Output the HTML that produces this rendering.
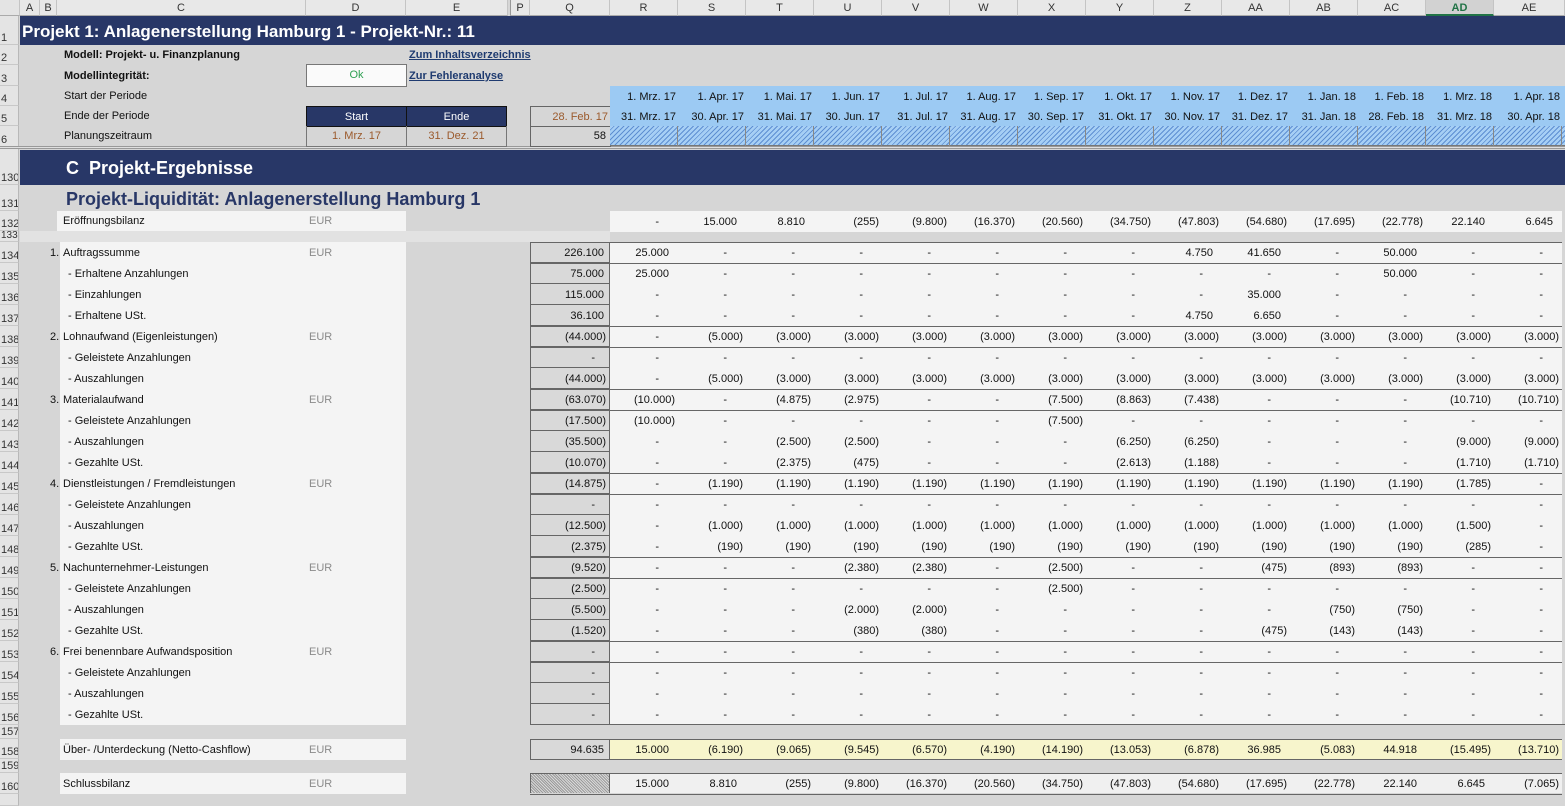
<!DOCTYPE html>
<html><head><meta charset="utf-8"><style>
*{margin:0;padding:0;box-sizing:border-box}
body{width:1565px;height:806px;overflow:hidden;background:#d6d6d6;font-family:"Liberation Sans",Arial,sans-serif;font-size:11px;color:#111;position:relative}
.a{position:absolute}
.rh{position:absolute;left:0;width:19px;background:#e4e4e4;border-right:1px solid #b8b8b8;border-bottom:1px solid #c8c8c8;font-size:11px;color:#333;padding-left:1px;overflow:hidden;display:flex;align-items:flex-end;line-height:12px}
.ch{position:absolute;top:0;height:16px;background:#e8e8e8;border-right:1px solid #c4c4c4;border-bottom:1px solid #aaa;text-align:center;line-height:16px;color:#333;font-size:11px}
.row{position:absolute;left:0;width:1565px;height:21px;line-height:23px}
.lb{position:absolute;left:60px;width:346px;height:21px;background:#f4f4f4;line-height:23px}
.lb span{position:absolute}
.u{left:249px;color:#8a8a8a}
.d{position:absolute;left:530px;top:0;display:flex;height:21px}
.d i{font-style:normal;display:block;width:68px;height:21px;text-align:right;padding-right:9px;background:#f4f4f4;line-height:23px}
.d i.n{padding-right:3px}
.d i.z{padding-right:19px}
.d b{font-weight:normal;display:block;width:80px;height:21px;text-align:right;padding-right:5px;background:#d9d9d9;border:1px solid #666;border-top:none;line-height:23px}
.d b.n{padding-right:3px}
.d b.z{padding-right:14px}
.bt .d i{border-top:1px solid #666;line-height:21px}
.bt .d b{border-top:1px solid #666;line-height:21px}
.nav{background:#283767;color:#fff;font-weight:bold}
.blue{background:#9ccaf3}
.hatch{background:repeating-linear-gradient(135deg,#a6cff5 0,#a6cff5 2.5px,#5e8fd2 2.5px,#5e8fd2 3.5px)}
.lnk{color:#1f3b70;font-weight:bold;text-decoration:underline}
.dt span{width:68px;text-align:right;padding-right:2px}
</style></head><body>

<div class="ch" style="left:0;width:20px;background:#e4e4e4"></div>
<div class="ch" style="left:20px;width:20px">A</div>
<div class="ch" style="left:40px;width:17px">B</div>
<div class="ch" style="left:57px;width:249px">C</div>
<div class="ch" style="left:306px;width:100px">D</div>
<div class="ch" style="left:406px;width:102px">E</div>
<div class="ch" style="left:510px;width:20px;border-left:1px solid #999">P</div>
<div class="ch" style="left:530px;width:80px">Q</div>
<div class="ch" style="left:610px;width:68px">R</div>
<div class="ch" style="left:678px;width:68px">S</div>
<div class="ch" style="left:746px;width:68px">T</div>
<div class="ch" style="left:814px;width:68px">U</div>
<div class="ch" style="left:882px;width:68px">V</div>
<div class="ch" style="left:950px;width:68px">W</div>
<div class="ch" style="left:1018px;width:68px">X</div>
<div class="ch" style="left:1086px;width:68px">Y</div>
<div class="ch" style="left:1154px;width:68px">Z</div>
<div class="ch" style="left:1222px;width:68px">AA</div>
<div class="ch" style="left:1290px;width:68px">AB</div>
<div class="ch" style="left:1358px;width:68px">AC</div>
<div class="ch" style="left:1426px;width:68px;background:#d2d2d2;color:#217346;font-weight:bold;border-bottom:2px solid #217346">AD</div>
<div class="ch" style="left:1494px;width:71px">AE</div>

<div class="rh" style="top:16px;height:29px">1</div>
<div class="rh" style="top:45px;height:20px">2</div>
<div class="rh" style="top:65px;height:21px">3</div>
<div class="rh" style="top:86px;height:20px">4</div>
<div class="rh" style="top:106px;height:20px">5</div>
<div class="rh" style="top:126px;height:21px">6</div>
<div class="a" style="top:146px;left:0;width:1565px;height:3px;border-top:1px solid #999;border-bottom:1px solid #999;background:#e0e0e0"></div>
<div class="rh" style="top:149px;height:36px">130</div>
<div class="rh" style="top:185px;height:26px">131</div>
<div class="rh" style="top:211px;height:20px">132</div>
<div class="rh" style="top:231px;height:11px;font-size:10px;line-height:10px">133</div>
<div class="rh" style="top:242px;height:21px">134</div>
<div class="rh" style="top:263px;height:21px">135</div>
<div class="rh" style="top:284px;height:21px">136</div>
<div class="rh" style="top:305px;height:21px">137</div>
<div class="rh" style="top:326px;height:21px">138</div>
<div class="rh" style="top:347px;height:21px">139</div>
<div class="rh" style="top:368px;height:21px">140</div>
<div class="rh" style="top:389px;height:21px">141</div>
<div class="rh" style="top:410px;height:21px">142</div>
<div class="rh" style="top:431px;height:21px">143</div>
<div class="rh" style="top:452px;height:21px">144</div>
<div class="rh" style="top:473px;height:21px">145</div>
<div class="rh" style="top:494px;height:21px">146</div>
<div class="rh" style="top:515px;height:21px">147</div>
<div class="rh" style="top:536px;height:21px">148</div>
<div class="rh" style="top:557px;height:21px">149</div>
<div class="rh" style="top:578px;height:21px">150</div>
<div class="rh" style="top:599px;height:21px">151</div>
<div class="rh" style="top:620px;height:21px">152</div>
<div class="rh" style="top:641px;height:21px">153</div>
<div class="rh" style="top:662px;height:21px">154</div>
<div class="rh" style="top:683px;height:21px">155</div>
<div class="rh" style="top:704px;height:21px">156</div>
<div class="rh" style="top:725px;height:14px">157</div>
<div class="rh" style="top:739px;height:20px">158</div>
<div class="rh" style="top:759px;height:14px">159</div>
<div class="rh" style="top:773px;height:21px">160</div>
<div class="rh" style="top:794px;height:12px"></div>

<div class="a nav" style="left:20px;top:16px;width:1545px;height:29px;font-size:17px;line-height:31px;padding-left:2px">Projekt 1: Anlagenerstellung Hamburg 1 - Projekt-Nr.: 11</div>
<div class="a" style="left:64px;top:45px;line-height:21px;font-weight:bold">Modell: Projekt- u. Finanzplanung</div>
<div class="a lnk" style="left:409px;top:45px;line-height:21px">Zum Inhaltsverzeichnis</div>
<div class="a" style="left:64px;top:65px;line-height:22px;font-weight:bold">Modellintegrität:</div>
<div class="a" style="left:306px;top:64px;width:101px;height:23px;background:#fafafa;border:1px solid #777;text-align:center;line-height:21px;color:#2ea052">Ok</div>
<div class="a lnk" style="left:409px;top:65px;line-height:22px">Zur Fehleranalyse</div>
<div class="a" style="left:64px;top:86px;line-height:21px">Start der Periode</div>
<div class="a" style="left:64px;top:106px;line-height:21px">Ende der Periode</div>
<div class="a" style="left:64px;top:126px;line-height:21px">Planungszeitraum</div>
<div class="a nav" style="left:306px;top:106px;width:101px;height:21px;border:1px solid #111;text-align:center;line-height:20px;font-weight:normal">Start</div>
<div class="a nav" style="left:406px;top:106px;width:101px;height:21px;border:1px solid #111;text-align:center;line-height:20px;font-weight:normal">Ende</div>
<div class="a" style="left:306px;top:126px;width:101px;height:21px;border:1px solid #777;border-top:none;text-align:center;line-height:21px;color:#9b5a2c">1. Mrz. 17</div>
<div class="a" style="left:406px;top:126px;width:101px;height:21px;border:1px solid #777;border-top:none;text-align:center;line-height:21px;color:#9b5a2c">31. Dez. 21</div>
<div class="a" style="left:530px;top:106px;width:81px;height:21px;border:1px solid #666;text-align:right;padding-right:2px;line-height:20px;color:#9b5a2c">28. Feb. 17</div>
<div class="a" style="left:530px;top:126px;width:81px;height:21px;border:1px solid #666;border-top:none;text-align:right;padding-right:4px;line-height:21px">58</div>

<div class="a blue" style="left:610px;top:86px;width:955px;height:40px"></div>
<div class="a dt" style="left:610px;top:86px;display:flex;line-height:22px">
<span>1. Mrz. 17</span><span>1. Apr. 17</span><span>1. Mai. 17</span><span>1. Jun. 17</span><span>1. Jul. 17</span><span>1. Aug. 17</span><span>1. Sep. 17</span><span>1. Okt. 17</span><span>1. Nov. 17</span><span>1. Dez. 17</span><span>1. Jan. 18</span><span>1. Feb. 18</span><span>1. Mrz. 18</span><span>1. Apr. 18</span></div>
<div class="a dt" style="left:610px;top:106px;display:flex;line-height:22px">
<span>31. Mrz. 17</span><span>30. Apr. 17</span><span>31. Mai. 17</span><span>30. Jun. 17</span><span>31. Jul. 17</span><span>31. Aug. 17</span><span>30. Sep. 17</span><span>31. Okt. 17</span><span>30. Nov. 17</span><span>31. Dez. 17</span><span>31. Jan. 18</span><span>28. Feb. 18</span><span>31. Mrz. 18</span><span>30. Apr. 18</span></div>
<div class="a hatch" style="left:610px;top:126px;width:955px;height:20px;border-bottom:1px solid #777"></div>
<div class="a" style="left:610px;top:126px;display:flex;height:20px"><span style="width:68px;border-right:1px solid #888"></span><span style="width:68px;border-right:1px solid #888"></span><span style="width:68px;border-right:1px solid #888"></span><span style="width:68px;border-right:1px solid #888"></span><span style="width:68px;border-right:1px solid #888"></span><span style="width:68px;border-right:1px solid #888"></span><span style="width:68px;border-right:1px solid #888"></span><span style="width:68px;border-right:1px solid #888"></span><span style="width:68px;border-right:1px solid #888"></span><span style="width:68px;border-right:1px solid #888"></span><span style="width:68px;border-right:1px solid #888"></span><span style="width:68px;border-right:1px solid #888"></span><span style="width:68px;border-right:1px solid #888"></span><span style="width:68px;border-right:1px solid #888"></span></div>

<div class="a nav" style="left:20px;top:150px;width:1545px;height:35px;font-size:18px;line-height:37px;padding-left:46px">C&nbsp; Projekt-Ergebnisse</div>
<div class="a" style="left:66px;top:185px;line-height:28px;font-size:18px;font-weight:bold;color:#283767">Projekt-Liquidität: Anlagenerstellung Hamburg 1</div>

<div class="row" style="top:211px;height:20px;line-height:21px">
<div class="lb" style="left:57px;width:349px;height:20px;line-height:21px"><span style="left:6px">Eröffnungsbilanz</span><span class="u" style="left:252px">EUR</span></div>
<div class="d" style="left:610px;height:20px"><i class="z">-</i><i>15.000</i><i>8.810</i><i class="n">(255)</i><i class="n">(9.800)</i><i class="n">(16.370)</i><i class="n">(20.560)</i><i class="n">(34.750)</i><i class="n">(47.803)</i><i class="n">(54.680)</i><i class="n">(17.695)</i><i class="n">(22.778)</i><i>22.140</i><i>6.645</i></div>
</div>
<div class="a" style="left:20px;top:231px;width:590px;height:11px;background:#e2e2e2"></div>

<div class="a" style="left:60px;top:242px;width:346px;height:483px;background:#f4f4f4"></div>

<div class="row bt" style="top:242px"><span class="a" style="left:50px">1.</span><div class="lb"><span style="left:3px">Auftragssumme</span><span class="u">EUR</span></div>
<div class="d"><b>226.100</b><i>25.000</i><i class="z">-</i><i class="z">-</i><i class="z">-</i><i class="z">-</i><i class="z">-</i><i class="z">-</i><i class="z">-</i><i>4.750</i><i>41.650</i><i class="z">-</i><i>50.000</i><i class="z">-</i><i class="z">-</i></div></div>
<div class="row bt" style="top:263px"><div class="lb"><span style="left:8px">- Erhaltene Anzahlungen</span></div>
<div class="d"><b>75.000</b><i>25.000</i><i class="z">-</i><i class="z">-</i><i class="z">-</i><i class="z">-</i><i class="z">-</i><i class="z">-</i><i class="z">-</i><i class="z">-</i><i class="z">-</i><i class="z">-</i><i>50.000</i><i class="z">-</i><i class="z">-</i></div></div>
<div class="row" style="top:284px"><div class="lb"><span style="left:8px">- Einzahlungen</span></div>
<div class="d"><b>115.000</b><i class="z">-</i><i class="z">-</i><i class="z">-</i><i class="z">-</i><i class="z">-</i><i class="z">-</i><i class="z">-</i><i class="z">-</i><i class="z">-</i><i>35.000</i><i class="z">-</i><i class="z">-</i><i class="z">-</i><i class="z">-</i></div></div>
<div class="row" style="top:305px"><div class="lb"><span style="left:8px">- Erhaltene USt.</span></div>
<div class="d"><b>36.100</b><i class="z">-</i><i class="z">-</i><i class="z">-</i><i class="z">-</i><i class="z">-</i><i class="z">-</i><i class="z">-</i><i class="z">-</i><i>4.750</i><i>6.650</i><i class="z">-</i><i class="z">-</i><i class="z">-</i><i class="z">-</i></div></div>

<div class="row bt" style="top:326px"><span class="a" style="left:50px">2.</span><div class="lb"><span style="left:3px">Lohnaufwand (Eigenleistungen)</span><span class="u">EUR</span></div>
<div class="d"><b class="n">(44.000)</b><i class="z">-</i><i class="n">(5.000)</i><i class="n">(3.000)</i><i class="n">(3.000)</i><i class="n">(3.000)</i><i class="n">(3.000)</i><i class="n">(3.000)</i><i class="n">(3.000)</i><i class="n">(3.000)</i><i class="n">(3.000)</i><i class="n">(3.000)</i><i class="n">(3.000)</i><i class="n">(3.000)</i><i class="n">(3.000)</i></div></div>
<div class="row bt" style="top:347px"><div class="lb"><span style="left:8px">- Geleistete Anzahlungen</span></div>
<div class="d"><b class="z">-</b><i class="z">-</i><i class="z">-</i><i class="z">-</i><i class="z">-</i><i class="z">-</i><i class="z">-</i><i class="z">-</i><i class="z">-</i><i class="z">-</i><i class="z">-</i><i class="z">-</i><i class="z">-</i><i class="z">-</i><i class="z">-</i></div></div>
<div class="row" style="top:368px"><div class="lb"><span style="left:8px">- Auszahlungen</span></div>
<div class="d"><b class="n">(44.000)</b><i class="z">-</i><i class="n">(5.000)</i><i class="n">(3.000)</i><i class="n">(3.000)</i><i class="n">(3.000)</i><i class="n">(3.000)</i><i class="n">(3.000)</i><i class="n">(3.000)</i><i class="n">(3.000)</i><i class="n">(3.000)</i><i class="n">(3.000)</i><i class="n">(3.000)</i><i class="n">(3.000)</i><i class="n">(3.000)</i></div></div>

<div class="row bt" style="top:389px"><span class="a" style="left:50px">3.</span><div class="lb"><span style="left:3px">Materialaufwand</span><span class="u">EUR</span></div>
<div class="d"><b class="n">(63.070)</b><i class="n">(10.000)</i><i class="z">-</i><i class="n">(4.875)</i><i class="n">(2.975)</i><i class="z">-</i><i class="z">-</i><i class="n">(7.500)</i><i class="n">(8.863)</i><i class="n">(7.438)</i><i class="z">-</i><i class="z">-</i><i class="z">-</i><i class="n">(10.710)</i><i class="n">(10.710)</i></div></div>
<div class="row bt" style="top:410px"><div class="lb"><span style="left:8px">- Geleistete Anzahlungen</span></div>
<div class="d"><b class="n">(17.500)</b><i class="n">(10.000)</i><i class="z">-</i><i class="z">-</i><i class="z">-</i><i class="z">-</i><i class="z">-</i><i class="n">(7.500)</i><i class="z">-</i><i class="z">-</i><i class="z">-</i><i class="z">-</i><i class="z">-</i><i class="z">-</i><i class="z">-</i></div></div>
<div class="row" style="top:431px"><div class="lb"><span style="left:8px">- Auszahlungen</span></div>
<div class="d"><b class="n">(35.500)</b><i class="z">-</i><i class="z">-</i><i class="n">(2.500)</i><i class="n">(2.500)</i><i class="z">-</i><i class="z">-</i><i class="z">-</i><i class="n">(6.250)</i><i class="n">(6.250)</i><i class="z">-</i><i class="z">-</i><i class="z">-</i><i class="n">(9.000)</i><i class="n">(9.000)</i></div></div>
<div class="row" style="top:452px"><div class="lb"><span style="left:8px">- Gezahlte USt.</span></div>
<div class="d"><b class="n">(10.070)</b><i class="z">-</i><i class="z">-</i><i class="n">(2.375)</i><i class="n">(475)</i><i class="z">-</i><i class="z">-</i><i class="z">-</i><i class="n">(2.613)</i><i class="n">(1.188)</i><i class="z">-</i><i class="z">-</i><i class="z">-</i><i class="n">(1.710)</i><i class="n">(1.710)</i></div></div>

<div class="row bt" style="top:473px"><span class="a" style="left:50px">4.</span><div class="lb"><span style="left:3px">Dienstleistungen / Fremdleistungen</span><span class="u">EUR</span></div>
<div class="d"><b class="n">(14.875)</b><i class="z">-</i><i class="n">(1.190)</i><i class="n">(1.190)</i><i class="n">(1.190)</i><i class="n">(1.190)</i><i class="n">(1.190)</i><i class="n">(1.190)</i><i class="n">(1.190)</i><i class="n">(1.190)</i><i class="n">(1.190)</i><i class="n">(1.190)</i><i class="n">(1.190)</i><i class="n">(1.785)</i><i class="z">-</i></div></div>
<div class="row bt" style="top:494px"><div class="lb"><span style="left:8px">- Geleistete Anzahlungen</span></div>
<div class="d"><b class="z">-</b><i class="z">-</i><i class="z">-</i><i class="z">-</i><i class="z">-</i><i class="z">-</i><i class="z">-</i><i class="z">-</i><i class="z">-</i><i class="z">-</i><i class="z">-</i><i class="z">-</i><i class="z">-</i><i class="z">-</i><i class="z">-</i></div></div>
<div class="row" style="top:515px"><div class="lb"><span style="left:8px">- Auszahlungen</span></div>
<div class="d"><b class="n">(12.500)</b><i class="z">-</i><i class="n">(1.000)</i><i class="n">(1.000)</i><i class="n">(1.000)</i><i class="n">(1.000)</i><i class="n">(1.000)</i><i class="n">(1.000)</i><i class="n">(1.000)</i><i class="n">(1.000)</i><i class="n">(1.000)</i><i class="n">(1.000)</i><i class="n">(1.000)</i><i class="n">(1.500)</i><i class="z">-</i></div></div>
<div class="row" style="top:536px"><div class="lb"><span style="left:8px">- Gezahlte USt.</span></div>
<div class="d"><b class="n">(2.375)</b><i class="z">-</i><i class="n">(190)</i><i class="n">(190)</i><i class="n">(190)</i><i class="n">(190)</i><i class="n">(190)</i><i class="n">(190)</i><i class="n">(190)</i><i class="n">(190)</i><i class="n">(190)</i><i class="n">(190)</i><i class="n">(190)</i><i class="n">(285)</i><i class="z">-</i></div></div>

<div class="row bt" style="top:557px"><span class="a" style="left:50px">5.</span><div class="lb"><span style="left:3px">Nachunternehmer-Leistungen</span><span class="u">EUR</span></div>
<div class="d"><b class="n">(9.520)</b><i class="z">-</i><i class="z">-</i><i class="z">-</i><i class="n">(2.380)</i><i class="n">(2.380)</i><i class="z">-</i><i class="n">(2.500)</i><i class="z">-</i><i class="z">-</i><i class="n">(475)</i><i class="n">(893)</i><i class="n">(893)</i><i class="z">-</i><i class="z">-</i></div></div>
<div class="row bt" style="top:578px"><div class="lb"><span style="left:8px">- Geleistete Anzahlungen</span></div>
<div class="d"><b class="n">(2.500)</b><i class="z">-</i><i class="z">-</i><i class="z">-</i><i class="z">-</i><i class="z">-</i><i class="z">-</i><i class="n">(2.500)</i><i class="z">-</i><i class="z">-</i><i class="z">-</i><i class="z">-</i><i class="z">-</i><i class="z">-</i><i class="z">-</i></div></div>
<div class="row" style="top:599px"><div class="lb"><span style="left:8px">- Auszahlungen</span></div>
<div class="d"><b class="n">(5.500)</b><i class="z">-</i><i class="z">-</i><i class="z">-</i><i class="n">(2.000)</i><i class="n">(2.000)</i><i class="z">-</i><i class="z">-</i><i class="z">-</i><i class="z">-</i><i class="z">-</i><i class="n">(750)</i><i class="n">(750)</i><i class="z">-</i><i class="z">-</i></div></div>
<div class="row" style="top:620px"><div class="lb"><span style="left:8px">- Gezahlte USt.</span></div>
<div class="d"><b class="n">(1.520)</b><i class="z">-</i><i class="z">-</i><i class="z">-</i><i class="n">(380)</i><i class="n">(380)</i><i class="z">-</i><i class="z">-</i><i class="z">-</i><i class="z">-</i><i class="n">(475)</i><i class="n">(143)</i><i class="n">(143)</i><i class="z">-</i><i class="z">-</i></div></div>

<div class="row bt" style="top:641px"><span class="a" style="left:50px">6.</span><div class="lb"><span style="left:3px">Frei benennbare Aufwandsposition</span><span class="u">EUR</span></div>
<div class="d"><b class="z">-</b><i class="z">-</i><i class="z">-</i><i class="z">-</i><i class="z">-</i><i class="z">-</i><i class="z">-</i><i class="z">-</i><i class="z">-</i><i class="z">-</i><i class="z">-</i><i class="z">-</i><i class="z">-</i><i class="z">-</i><i class="z">-</i></div></div>
<div class="row bt" style="top:662px"><div class="lb"><span style="left:8px">- Geleistete Anzahlungen</span></div>
<div class="d"><b class="z">-</b><i class="z">-</i><i class="z">-</i><i class="z">-</i><i class="z">-</i><i class="z">-</i><i class="z">-</i><i class="z">-</i><i class="z">-</i><i class="z">-</i><i class="z">-</i><i class="z">-</i><i class="z">-</i><i class="z">-</i><i class="z">-</i></div></div>
<div class="row" style="top:683px"><div class="lb"><span style="left:8px">- Auszahlungen</span></div>
<div class="d"><b class="z">-</b><i class="z">-</i><i class="z">-</i><i class="z">-</i><i class="z">-</i><i class="z">-</i><i class="z">-</i><i class="z">-</i><i class="z">-</i><i class="z">-</i><i class="z">-</i><i class="z">-</i><i class="z">-</i><i class="z">-</i><i class="z">-</i></div></div>
<div class="row" style="top:704px"><div class="lb"><span style="left:8px">- Gezahlte USt.</span></div>
<div class="d"><b class="z">-</b><i class="z">-</i><i class="z">-</i><i class="z">-</i><i class="z">-</i><i class="z">-</i><i class="z">-</i><i class="z">-</i><i class="z">-</i><i class="z">-</i><i class="z">-</i><i class="z">-</i><i class="z">-</i><i class="z">-</i><i class="z">-</i></div></div>
<div class="a" style="left:610px;top:724px;width:955px;height:1px;background:#666"></div>

<div class="row" style="top:739px;height:21px">
<div class="lb"><span style="left:3px">Über- /Unterdeckung (Netto-Cashflow)</span><span class="u">EUR</span></div>
<div class="d" style="border-top:1px solid #666;border-bottom:1px solid #666;height:21px"><b style="border:1px solid #666;border-top:none;border-bottom:none;height:19px;line-height:21px">94.635</b><i style="background:#f7f5cc;height:19px;line-height:21px">15.000</i><i class="n" style="background:#f7f5cc;height:19px;line-height:21px">(6.190)</i><i class="n" style="background:#f7f5cc;height:19px;line-height:21px">(9.065)</i><i class="n" style="background:#f7f5cc;height:19px;line-height:21px">(9.545)</i><i class="n" style="background:#f7f5cc;height:19px;line-height:21px">(6.570)</i><i class="n" style="background:#f7f5cc;height:19px;line-height:21px">(4.190)</i><i class="n" style="background:#f7f5cc;height:19px;line-height:21px">(14.190)</i><i class="n" style="background:#f7f5cc;height:19px;line-height:21px">(13.053)</i><i class="n" style="background:#f7f5cc;height:19px;line-height:21px">(6.878)</i><i style="background:#f7f5cc;height:19px;line-height:21px">36.985</i><i class="n" style="background:#f7f5cc;height:19px;line-height:21px">(5.083)</i><i style="background:#f7f5cc;height:19px;line-height:21px">44.918</i><i class="n" style="background:#f7f5cc;height:19px;line-height:21px">(15.495)</i><i class="n" style="background:#f7f5cc;height:19px;line-height:21px">(13.710)</i></div>
</div>

<div class="row" style="top:773px;height:21px">
<div class="lb"><span style="left:3px">Schlussbilanz</span><span class="u">EUR</span></div>
<div class="d" style="border-top:1px solid #666;border-bottom:3px double #666;height:22px"><b style="border:1px solid #666;border-top:none;border-bottom:none;height:19px;background:repeating-linear-gradient(45deg,#9a9a9a 0,#9a9a9a 1px,#d9d9d9 1px,#d9d9d9 2px)"></b><i style="height:19px;line-height:21px;background:#f0f0f0">15.000</i><i style="height:19px;line-height:21px;background:#f0f0f0">8.810</i><i class="n" style="height:19px;line-height:21px;background:#f0f0f0">(255)</i><i class="n" style="height:19px;line-height:21px;background:#f0f0f0">(9.800)</i><i class="n" style="height:19px;line-height:21px;background:#f0f0f0">(16.370)</i><i class="n" style="height:19px;line-height:21px;background:#f0f0f0">(20.560)</i><i class="n" style="height:19px;line-height:21px;background:#f0f0f0">(34.750)</i><i class="n" style="height:19px;line-height:21px;background:#f0f0f0">(47.803)</i><i class="n" style="height:19px;line-height:21px;background:#f0f0f0">(54.680)</i><i class="n" style="height:19px;line-height:21px;background:#f0f0f0">(17.695)</i><i class="n" style="height:19px;line-height:21px;background:#f0f0f0">(22.778)</i><i style="height:19px;line-height:21px;background:#f0f0f0">22.140</i><i style="height:19px;line-height:21px;background:#f0f0f0">6.645</i><i class="n" style="height:19px;line-height:21px;background:#f0f0f0">(7.065)</i></div>
</div>

</body></html>
